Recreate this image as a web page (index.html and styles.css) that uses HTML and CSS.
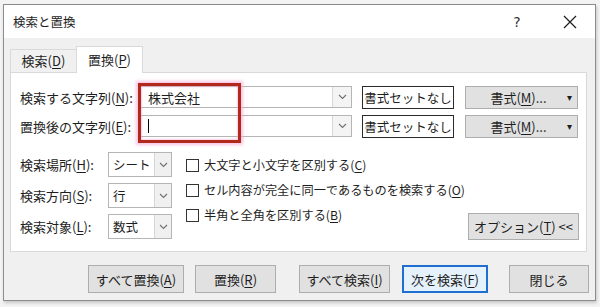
FILE: index.html
```html
<!DOCTYPE html>
<html lang="ja">
<head>
<meta charset="utf-8">
<link rel="stylesheet" href="styles.css">
</head>
<body>
<div class="window">
  <div class="titlebar">
    <span class="title">検索と置換</span>
    <span class="help">?</span>
    <span class="close">
      <svg width="14" height="14" viewBox="0 0 14 14"><path d="M1 1L13 13M13 1L1 13" stroke="#222" stroke-width="1.3" fill="none"/></svg>
    </span>
  </div>
  <div class="tabs">
    <div class="tab">検索(<u>D</u>)</div>
    <div class="tab active">置換(<u>P</u>)</div>
  </div>
  <div class="panel">
    <div class="row">
      <label class="lbl">検索する文字列(<u>N</u>):</label>
      <div class="combo wide"><span class="val">株式会社</span><span class="drop"><svg width="9" height="6" viewBox="0 0 9 6"><path d="M1 1L4.5 4.5L8 1" stroke="#707070" fill="none" stroke-width="1.1"/></svg></span></div>
      <div class="fmtnone">書式セットなし</div>
      <div class="btn fmt"><span>書式(<u>M</u>)...</span><span class="tri">▾</span></div>
    </div>
    <div class="row">
      <label class="lbl">置換後の文字列(<u>E</u>):</label>
      <div class="combo wide"><span class="val"><span class="caret"></span></span><span class="drop"><svg width="9" height="6" viewBox="0 0 9 6"><path d="M1 1L4.5 4.5L8 1" stroke="#707070" fill="none" stroke-width="1.1"/></svg></span></div>
      <div class="fmtnone">書式セットなし</div>
      <div class="btn fmt"><span>書式(<u>M</u>)...</span><span class="tri">▾</span></div>
    </div>
    <div class="lower">
      <div class="opts">
        <div class="orow"><label class="lbl2">検索場所(<u>H</u>):</label><div class="combo small"><span class="val">シート</span><span class="drop"><svg width="9" height="6" viewBox="0 0 9 6"><path d="M1 1L4.5 4.5L8 1" stroke="#707070" fill="none" stroke-width="1.1"/></svg></span></div></div>
        <div class="orow"><label class="lbl2">検索方向(<u>S</u>):</label><div class="combo small"><span class="val">行</span><span class="drop"><svg width="9" height="6" viewBox="0 0 9 6"><path d="M1 1L4.5 4.5L8 1" stroke="#707070" fill="none" stroke-width="1.1"/></svg></span></div></div>
        <div class="orow"><label class="lbl2">検索対象(<u>L</u>):</label><div class="combo small"><span class="val">数式</span><span class="drop"><svg width="9" height="6" viewBox="0 0 9 6"><path d="M1 1L4.5 4.5L8 1" stroke="#707070" fill="none" stroke-width="1.1"/></svg></span></div></div>
      </div>
      <div class="checks">
        <div class="chk"><span class="box"></span><span>大文字と小文字を区別する(<u>C</u>)</span></div>
        <div class="chk"><span class="box"></span><span>セル内容が完全に同一であるものを検索する(<u>O</u>)</span></div>
        <div class="chk"><span class="box"></span><span>半角と全角を区別する(<u>B</u>)</span></div>
      </div>
      <div class="btn optbtn"><span>オプション(<u>T</u>) &lt;&lt;</span></div>
    </div>
    <div class="highlight"></div>
  </div>
  <div class="buttons">
    <div class="btn b1"><span>すべて置換(<u>A</u>)</span></div>
    <div class="btn b2"><span>置換(<u>R</u>)</span></div>
    <div class="btn b3"><span>すべて検索(<u>I</u>)</span></div>
    <div class="btn b4 default"><span>次を検索(<u>F</u>)</span></div>
    <div class="btn b5"><span>閉じる</span></div>
  </div>
</div>
</body>
</html>
```

FILE: styles.css
```css
* { box-sizing: border-box; }
html, body { margin: 0; padding: 0; }
body {
  width: 600px;
  height: 307px;
  background: #f3f3f3;
  font-family: "Noto Sans CJK JP", "Noto Sans", sans-serif;
  font-size: 13px;
  color: #1e1e1e;
  overflow: hidden;
  white-space: nowrap;
}
u { text-decoration: underline; text-underline-offset: 2px; }
.window {
  margin: 4px 0 0 3px;
  width: 593px;
  height: 297px;
  border: 1px solid #8c8c8c;
  background: #f0f0f0;
  box-shadow: 1px 2px 3px rgba(0,0,0,0.18);
  position: relative;
}
.titlebar {
  height: 33px;
  background: #fff;
  display: flex;
  align-items: center;
  padding-left: 9px;
}
.title { font-size: 12.5px; flex: 1; }
.help { width: 16px; font-size: 14px; color: #333; margin-right: 38px; text-align: center; font-family: "DejaVu Sans", sans-serif; }
.close { width: 14px; height: 14px; margin-right: 18px; display: flex; }
.tabs {
  display: flex;
  align-items: flex-end;
  height: 34px;
  padding-left: 6px;
  position: relative;
  z-index: 2;
}
.tab {
  height: 23px;
  line-height: 22px;
  text-align: center;
  border: 1px solid #d9d9d9;
  border-bottom: none;
  background: #f0f0f0;
  width: 66px;
}
.tab:first-child { border-right: none; }
.tab.active {
  background: #fff;
  height: 27px;
  line-height: 25px;
  width: 67px;
  margin-bottom: -1px;
}
.panel {
  margin: 0 8px 0 6px;
  height: 180px;
  background: #fff;
  border: 1px solid #d9d9d9;
  position: relative;
  padding: 13px 0 0 9px;
}
.row {
  display: flex;
  align-items: center;
  height: 22px;
  margin-bottom: 7px;
}
.lbl { width: 120px; }
.combo {
  height: 22px;
  border: 1px solid #b5b5b5;
  background: #fff;
  display: flex;
  align-items: stretch;
}
.combo .val { flex: 1; padding-left: 7px; display: flex; align-items: center; overflow: hidden; }
.combo .drop {
  width: 19px;
  border-left: 1px solid #d6d6d6;
  background: #f4f4f4;
  display: flex;
  align-items: center;
  justify-content: center;
}
.combo.wide { width: 212px; }
.caret { width: 1px; height: 14px; background: #000; }
.fmtnone {
  margin-left: 10px;
  width: 92px;
  height: 23px;
  border: 1px solid #2a2a2a;
  background: #fff;
  display: flex;
  align-items: center;
  justify-content: center;
  font-size: 12.5px;
}
.btn {
  background: #e1e1e1;
  border: 1px solid #adadad;
  display: flex;
  align-items: center;
  justify-content: center;
  font-size: 13px;
}
.fmt {
  margin-left: 11px;
  width: 113px;
  height: 23px;
  position: relative;
  padding-right: 6px;
}
.tri { position: absolute; right: 5px; top: 2px; font-size: 10px; }
.lower {
  display: flex;
  margin-top: 15px;
  position: relative;
}
.opts { width: 160px; }
.orow { display: flex; align-items: center; height: 25px; margin-bottom: 6px; }
.lbl2 { width: 88px; }
.combo.small { width: 64px; height: 25px; }
.combo.small .val { padding-left: 4px; font-size: 12.5px; }
.combo.small .drop { width: 17px; background: #f0f0f0; flex: none; }
.checks { padding-top: 4px; margin-left: 6px; font-size: 12.2px; }
.chk { display: flex; align-items: center; height: 18px; margin-bottom: 7px; }
.box { width: 13px; height: 13px; border: 1px solid #333; background: #fff; margin-right: 5px; flex: none; }
.optbtn {
  position: absolute;
  right: 7px;
  top: 61px;
  width: 111px;
  height: 27px;
}
.highlight {
  position: absolute;
  left: 127px;
  top: 10px;
  width: 103px;
  height: 60px;
  border: 3px solid #b0291a;
  box-shadow: 0 0 3px 2px rgba(245,170,215,0.7), inset 0 0 2px 1px rgba(245,170,215,0.6);
}
.buttons {
  display: flex;
  padding: 13px 0 0 84px;
}
.buttons .btn { height: 28px; }
.b1 { width: 96px; }
.b2 { width: 81px; margin-left: 11px; }
.b3 { width: 91px; margin-left: 23px; }
.b4 { width: 86px; margin-left: 12px; }
.b5 { width: 80px; margin-left: 21px; }
.default { background: #e5f1fb; border: 2px solid #1e6fd0; }
```
